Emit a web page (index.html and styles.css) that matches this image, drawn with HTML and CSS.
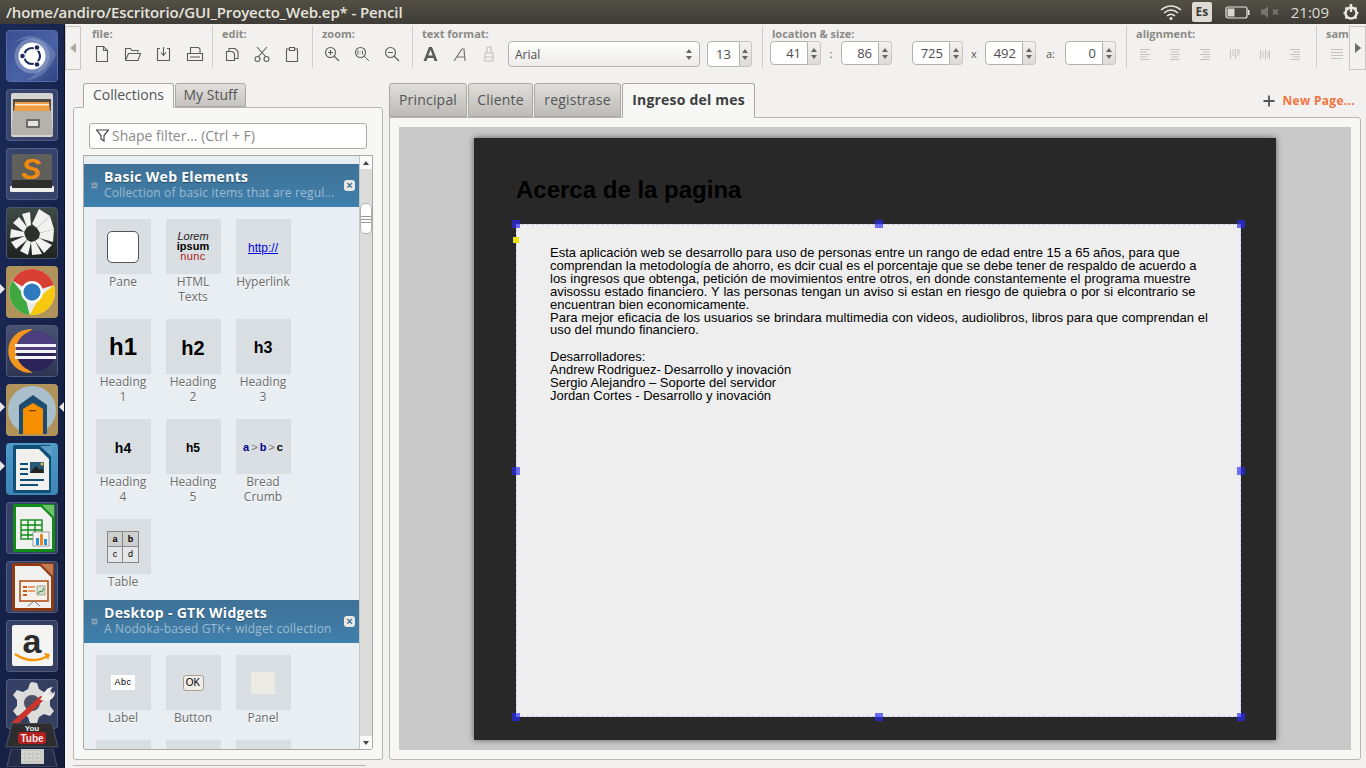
FILE: index.html
```html
<!DOCTYPE html>
<html lang="es">
<head>
<meta charset="utf-8">
<title>Pencil</title>
<link rel="stylesheet" href="styles.css">
</head>
<body>
<header class="titlebar">
  <div class="win-title">/home/andiro/Escritorio/GUI_Proyecto_Web.ep* - Pencil</div>
  <div class="tray">
    <svg class="tray-wifi" width="22" height="16" viewBox="0 0 22 16"><g fill="none" stroke="#e8e6df" stroke-width="1.6"><path d="M1 6 Q11 -2 21 6"/><path d="M4 9 Q11 3 18 9"/><path d="M7 12 Q11 8.5 15 12"/></g><circle cx="11" cy="14.5" r="1.5" fill="#e8e6df"/></svg>
    <span class="tray-lang">Es</span>
    <svg class="tray-batt" width="25" height="13" viewBox="0 0 25 13"><rect x="1" y="1" width="21" height="11" rx="2" fill="none" stroke="#e8e6df" stroke-width="1.2"/><rect x="2.5" y="2.5" width="7" height="8" fill="#d8d6cf"/><rect x="23" y="4" width="1.5" height="5" fill="#e8e6df"/></svg>
    <svg class="tray-vol" width="19" height="12" viewBox="0 0 19 12"><path d="M0 3.500h3l4-3.500v12l-4-3.500H0z" fill="#77756d"/><path d="M12 3.500l5 5m0-5l-5 5" stroke="#77756d" stroke-width="1.800"/></svg>
    <span class="tray-clock">21:09</span>
    <svg class="tray-power" width="18" height="18" viewBox="0 0 18 18"><circle cx="9" cy="10" r="5.500" fill="none" stroke="#e8e6df" stroke-width="2.600"/><path d="M9 1v8" stroke="#e8e6df" stroke-width="2.400"/><path d="M1.500 10h2M14.500 10h2M3.500 4.500l1.500 1.500M14.500 4.500l-1.500 1.500M3.500 15.500l1.500-1.500M14.500 15.500l-1.500-1.500" stroke="#e8e6df" stroke-width="2"/></svg>
  </div>
</header>

<div class="desktop">
  <nav class="launcher">
    <div class="tile tile-ubuntu">
      <svg width="52" height="52" viewBox="0 0 52 52"><path d="M6 14 Q30 -6 50 24 Q40 50 20 50 Q46 36 32 14 Q22 4 6 14z" fill="#8ea0c8" opacity=".4"/><circle cx="26" cy="26" r="17.500" fill="#93a5cc" opacity=".55"/><circle cx="26" cy="26" r="13.500" fill="#fff"/><circle cx="26" cy="26" r="8" fill="none" stroke="#1d2a5c" stroke-width="2.200"/><circle cx="31" cy="17.500" r="3.400" fill="#fff"/><circle cx="16.500" cy="26" r="3.400" fill="#fff"/><circle cx="31" cy="34.500" r="3.400" fill="#fff"/><circle cx="31" cy="17.500" r="2.300" fill="#1d2a5c"/><circle cx="16.500" cy="26" r="2.300" fill="#1d2a5c"/><circle cx="31" cy="34.500" r="2.300" fill="#1d2a5c"/></svg>
    </div>
    <div class="tile tile-glass">
      <svg width="52" height="52" viewBox="0 0 52 52"><rect x="5" y="4" width="42" height="44" rx="2" fill="#d5d4d0"/><rect x="7" y="10" width="38" height="14" fill="#4f4a43"/><path d="M9 13h34l1 9H8z" fill="#ee9c45"/><rect x="9" y="15" width="34" height="1.500" fill="#fbe9c8"/><path d="M7 22 H45 L47 46 H5z" fill="#b3b2ad"/><rect x="20" y="30" width="14" height="9" rx="1" fill="#6a6a66"/><rect x="22" y="32" width="10" height="5" fill="#e4e4e0"/></svg>
    </div>
    <div class="tile tile-glass">
      <svg width="52" height="52" viewBox="0 0 52 52"><rect x="4" y="38" width="44" height="6" rx="1" fill="#eeeeec"/><rect x="6" y="6" width="40" height="34" rx="2" fill="#5f5f5c"/><rect x="6" y="32" width="40" height="8" fill="#2e2e2c"/><text x="25" y="31" class="sublime-s">S</text></svg>
    </div>
    <div class="tile tile-pinwheel">
      <svg width="52" height="52" viewBox="0 0 52 52"><g fill="#f2f2f0"><path d="M26 17 L33 2 L44 9 L31 21z"/><path d="M31 21 L44 9 L48 22 L34 26z"/><path d="M34 26 L48 22 L47 35 L33 31z"/><path d="M33 31 L46 38 L38 46 L29 34z"/><path d="M29 34 L36 47 L26 48 L25 35z"/><path d="M25 35 L22 48 L14 44 L21 33z"/><path d="M21 33 L10 42 L5 35 L19 29z"/><path d="M19 29 L4 31 L5 22 L18 25z"/><path d="M18 25 L7 16 L13 10 L21 20z"/><path d="M21 20 L16 7 L24 5 L25 18z"/></g><circle cx="26" cy="26" r="6" fill="#2d312e"/></svg>
    </div>
    <div class="tile tile-tan">
      <svg width="52" height="52" viewBox="0 0 52 52"><g transform="translate(26 26) scale(1.15) translate(-26 -26)"><circle cx="26" cy="26" r="20" fill="#eaeaea"/><path d="M26 6 A20 20 0 0 1 45 20 L26 26 L9 16 A20 20 0 0 1 26 6z" fill="#d93f32"/><path d="M45 20 A20 20 0 0 1 24 46 L33 30z" fill="#f6c90e"/><path d="M24 46 A20 20 0 0 1 9 16 L20 30z" fill="#3fa93f"/><circle cx="26" cy="26" r="9.500" fill="#fff"/><circle cx="26" cy="26" r="7.500" fill="#2f79c0"/></g></svg>
    </div>
    <div class="tile tile-slate">
      <svg width="52" height="52" viewBox="0 0 52 52"><path d="M24 5 A21 21 0 0 0 24 47 A24 24 0 0 1 24 5z" fill="#f2951e" stroke="#f2951e" stroke-width="1.500"/><circle cx="30" cy="26" r="20" fill="#2c2458"/><path d="M30 6 A20 20 0 0 1 50 26 H10 A20 20 0 0 1 30 6z" fill="#4d3f7d"/><g fill="#f3f3f8"><rect x="9" y="19" width="41" height="3"/><rect x="9" y="25" width="41" height="3"/><rect x="9" y="31" width="41" height="3"/></g></svg>
    </div>
    <div class="tile tile-tan">
      <svg width="52" height="52" viewBox="0 0 52 52"><circle cx="26" cy="26" r="24" fill="#a9c0cc"/><path d="M13 50 V21 L27 11 L41 21 V50z" fill="#1c4d70"/><path d="M17 50 V25 L27 19 L37 25 V50z" fill="#f79000"/><rect x="23" y="26" width="7" height="1.300" fill="#7b4700"/></svg>
    </div>
    <div class="tile tile-writer">
      <svg width="52" height="52" viewBox="0 0 52 52"><rect x="7" y="2" width="38" height="48" rx="2" fill="#0f4f78"/><path d="M10 6 H33 L43 16 V47 H10z" fill="#f0f0ee"/><path d="M34 3 H46 V14z" fill="#5a9dc5"/><g fill="#0f4f78"><rect x="14" y="20" width="8" height="2"/><rect x="14" y="25" width="8" height="2"/><rect x="14" y="30" width="8" height="2"/><rect x="14" y="36" width="24" height="2"/><rect x="14" y="41" width="18" height="2"/></g><rect x="24" y="19" width="14" height="11" fill="#2c5878"/><path d="M24 30 L30 23 L34 27 L36 25 L38 30z" fill="#222"/><circle cx="36" cy="21" r="1.500" fill="#f4c430"/></svg>
    </div>
    <div class="tile tile-glass">
      <svg width="52" height="52" viewBox="0 0 52 52"><rect x="7" y="2" width="42" height="48" rx="2" fill="#118a1a"/><path d="M10 5 H35 L46 16 V47 H10z" fill="#f0f0ee"/><path d="M36 3 H48 V15z" fill="#6cc06a"/><g fill="none" stroke="#0f8a17" stroke-width="1.400"><rect x="15" y="18" width="21" height="19"/><path d="M15 23h21M15 28h21M15 33h21M22 18v19M29 18v19"/></g><rect x="27" y="30" width="16" height="14" fill="#f5f5f3" stroke="#888" stroke-width=".8"/><rect x="30" y="36" width="3" height="7" fill="#2c8fd0"/><rect x="34" y="32" width="3" height="11" fill="#e68a1e"/><rect x="38" y="37" width="3" height="6" fill="#2c8fd0"/></svg>
    </div>
    <div class="tile tile-glass">
      <svg width="52" height="52" viewBox="0 0 52 52"><rect x="6" y="2" width="42" height="48" rx="2" fill="#8f3a11"/><path d="M9 5 H34 L45 16 V47 H9z" fill="#f0f0ee"/><path d="M35 3 H47 V15z" fill="#c47a52"/><rect x="14" y="20" width="28" height="20" fill="#f8f2ea" stroke="#b4501c" stroke-width="1.600"/><g fill="#c9571e"><rect x="17" y="25" width="4" height="2"/><rect x="17" y="29" width="4" height="2"/><rect x="17" y="33" width="4" height="2"/></g><rect x="22" y="25" width="7" height="2" fill="#e0a070"/><rect x="22" y="29" width="7" height="2" fill="#e0a070"/><rect x="31" y="25" width="8" height="9" fill="#d8e2d0" stroke="#777" stroke-width=".6"/><path d="M32 33l2-3 2 1 2-4" stroke="#2c8a2c" fill="none"/><path d="M28 40l-6 5M28 40l6 5" stroke="#777" stroke-width="1"/></svg>
    </div>
    <div class="tile tile-glass">
      <svg width="52" height="52" viewBox="0 0 52 52"><rect x="6" y="5" width="41" height="41" rx="2" fill="#f4f4f2"/><text x="26" y="33" class="amazon-a">a</text><path d="M9 34 Q25 45 42 36" fill="none" stroke="#f79400" stroke-width="2.400"/><path d="M38 33 L44 34 L42 40z" fill="#f79400"/></svg>
    </div>
    <div class="tile tile-glass tile-tools">
      <svg width="52" height="52" viewBox="0 0 52 52"><path d="M26 3l5 1 2 6 5 3 6-2 4 5-4 5 0 6 4 5-4 5-6-2-5 3-2 6h-7l-2-6-5-3-6 2-4-5 4-5v-6l-4-5 4-5 6 2 5-3 2-6z" fill="#dcdcda"/><circle cx="26" cy="24" r="8" fill="#4d5166"/><path d="M9 44 L35 20" stroke="#c9342c" stroke-width="5.500" stroke-linecap="round"/><path d="M34 21 L38 14 Q41 8 47 8 L42 14 L45 17 L49 12 Q49 20 41 22z" fill="#eeeeec"/></svg>
    </div>
    <div class="fold fold-yt">
      <svg width="58" height="26" viewBox="0 0 58 26"><path d="M9 0 H49 L55 24 H3z" fill="#2d2c2f" stroke="#5b6277" stroke-width=".8"/><text x="29" y="8" class="yt-you">You</text><rect x="15" y="9" width="28" height="12" rx="3" fill="#b1201f"/><text x="29" y="19" class="yt-tube">Tube</text></svg>
    </div>
    <div class="fold fold-last">
      <svg width="58" height="18" viewBox="0 0 58 18"><path d="M8 0 H50 L54 18 H4z" fill="#232b47" stroke="#5b6277" stroke-width=".8"/><rect x="18" y="0" width="23" height="15" fill="#c8c8c4"/><path d="M19 3h21M19 7h21M19 11h21" stroke="#eeeeec" stroke-dasharray="2 2"/></svg>
    </div>
    <span class="pip pip-l pip-chrome"></span>
    <span class="pip pip-l pip-home"></span>
    <span class="pip pip-r pip-home"></span>
    <span class="pip pip-l pip-writer"></span>
  </nav>

  <div class="app">
    <div class="toolbar">
      <button class="scroll-btn scroll-left" aria-label="left"><i class="tri-left"></i></button>
      <section class="tgroup g-file">
        <h4>file:</h4>
        <div class="icons">
          <svg width="16" height="18" viewBox="0 0 16 18"><path d="M2.500 1.500h7l4 4v11h-11z M9.500 1.500v4h4" class="ic"/></svg>
          <svg width="18" height="16" viewBox="0 0 18 16"><path d="M1.500 14.500v-12h5l1.500 2h6v2 M1.500 14.500h12.500l2.500-7h-12l-3 7" class="ic"/></svg>
          <svg width="16" height="16" viewBox="0 0 16 16"><path d="M4 2.500H1.500v12h12v-12H11 M7.500 1v8 M5 6.500l2.500 3 2.500-3" class="ic"/></svg>
          <svg width="18" height="16" viewBox="0 0 18 16"><path d="M4.500 7V1.500h8L14 3v4 M1.500 7.500h15v7h-15z M4 11h10" class="ic"/></svg>
        </div>
      </section>
      <section class="tgroup g-edit">
        <h4>edit:</h4>
        <div class="icons">
          <svg width="14" height="16" viewBox="0 0 14 16"><path d="M1.500 5.500h6l2 2v7h-8z M4 5V2.500h6l3 3v7h-3" class="ic"/></svg>
          <svg width="16" height="17" viewBox="0 0 16 17"><path d="M3 1l9 10 M13 1L4 11" class="ic"/><circle cx="3.500" cy="13" r="2.500" class="ic"/><circle cx="12.500" cy="13" r="2.500" class="ic"/></svg>
          <svg width="14" height="17" viewBox="0 0 14 17"><path d="M4.500 3h-3v12.500h11V3h-3 M4.500 4.500V1.500h5v3z" class="ic"/></svg>
        </div>
      </section>
      <section class="tgroup g-zoom">
        <h4>zoom:</h4>
        <div class="icons">
          <svg width="16" height="16" viewBox="0 0 16 16"><circle cx="6.500" cy="6.500" r="5" class="ic"/><path d="M10 10l5 5 M4 6.500h5 M6.500 4v5" class="ic"/></svg>
          <svg width="16" height="16" viewBox="0 0 16 16"><circle cx="6.500" cy="6.500" r="5" class="ic"/><path d="M10 10l5 5 M4 4.500v4 M8.500 4.500v4 M6.300 5.500v.5 M6.300 7.500v.5" class="ic ic-thin"/></svg>
          <svg width="16" height="16" viewBox="0 0 16 16"><circle cx="6.500" cy="6.500" r="5" class="ic"/><path d="M10 10l5 5 M4 6.500h5" class="ic"/></svg>
        </div>
      </section>
      <section class="tgroup g-text">
        <h4>text format:</h4>
        <div class="icons icons-text">
          <svg class="tf-bold" width="15" height="14" viewBox="0 0 15 14"><path d="M0.500 14L6 0h3l5.500 14h-3l-1-3H4.500l-1 3z M5.300 8.500h4.400L7.500 3z" fill="#5b5b58" fill-rule="evenodd"/></svg>
          <svg class="tf-ital" width="14" height="13" viewBox="0 0 14 13"><path d="M1 13L9 1h2l1 12 M3.500 9h8" fill="none" stroke="#77766f" stroke-width="1.200"/></svg>
          <svg class="tf-brush" width="10" height="16" viewBox="0 0 10 16"><path d="M3 1h4v6H3z M1 7h8v8H1z M1 11h8" fill="none" stroke="#c4c3be" stroke-width="1.200"/></svg>
          <div class="combo"><span>Arial</span><i class="updown"></i></div>
          <div class="spin spin-tall"><span class="spin-val">13</span><span class="spin-btn"><i class="updown"></i></span></div>
        </div>
      </section>
      <section class="tgroup g-loc">
        <h4>location &amp; size:</h4>
        <div class="icons icons-loc">
          <div class="spin"><span class="spin-val">41</span><span class="spin-btn"><i class="updown"></i></span></div>
          <span class="loc-sep sep-colon">:</span>
          <div class="spin"><span class="spin-val">86</span><span class="spin-btn"><i class="updown"></i></span></div>
          <span class="loc-gap"></span>
          <div class="spin"><span class="spin-val">725</span><span class="spin-btn"><i class="updown"></i></span></div>
          <span class="loc-sep sep-x">x</span>
          <div class="spin"><span class="spin-val">492</span><span class="spin-btn"><i class="updown"></i></span></div>
          <span class="loc-sep sep-a">a:</span>
          <div class="spin"><span class="spin-val">0</span><span class="spin-btn"><i class="updown"></i></span></div>
        </div>
      </section>
      <section class="tgroup g-align">
        <h4>alignment:</h4>
        <div class="icons">
          <svg width="10" height="11" viewBox="0 0 10 11"><path d="M0 .5h10M0 3h7M0 5.500h10M0 8h7M0 10.500h10" class="al"/></svg>
          <svg width="10" height="11" viewBox="0 0 10 11"><path d="M0 .5h10M1.500 3h7M0 5.500h10M1.500 8h7M0 10.500h10" class="al"/></svg>
          <svg width="10" height="11" viewBox="0 0 10 11"><path d="M0 .5h10M3 3h7M0 5.500h10M3 8h7M0 10.500h10" class="al"/></svg>
          <svg width="10" height="11" viewBox="0 0 10 11"><path d="M.5 0v10M3 0v7M5.500 0v10M8 0v7M10 0v5" class="al"/></svg>
          <svg width="10" height="11" viewBox="0 0 10 11"><path d="M.5 1v9M3 2.500v6M5.500 0v11M8 2.500v6M9.500 1v9" class="al"/></svg>
          <svg width="10" height="11" viewBox="0 0 10 11"><path d="M0 .5h10M3 3h7M0 5.500h10M3 8h7M0 10.500h10" class="al"/></svg>
        </div>
      </section>
      <section class="tgroup g-same">
        <h4>same</h4>
        <div class="icons">
          <svg width="12" height="11" viewBox="0 0 12 11"><path d="M0 .5h12M0 3.500h12M0 6.500h12M0 9.500h12" class="al"/></svg>
        </div>
      </section>
      <button class="scroll-btn scroll-right" aria-label="right"><i class="tri-right"></i></button>
    </div>

    <div class="workspace">
      <aside class="sidebar">
        <div class="side-tabs">
          <span class="side-tab side-tab-on">Collections</span>
          <span class="side-tab side-tab-off">My Stuff</span>
        </div>
        <div class="side-panel">
          <div class="filter">
            <svg width="13" height="13" viewBox="0 0 13 13"><path d="M.5 1h12L8 6.500V12L5 10V6.500z" fill="none" stroke="#444" stroke-width="1.200"/></svg>
            <span>Shape filter... (Ctrl + F)</span>
          </div>
          <div class="shape-list">
            <div class="shape-scroll">
              <div class="coll-head">
                <span class="coll-min"></span>
                <div class="coll-txt"><b>Basic Web Elements</b><small>Collection of basic items that are regul...</small></div>
                <span class="coll-close">×</span>
              </div>
              <div class="shapes">
                <figure><div class="thumb"><span class="pane"></span></div><figcaption>Pane</figcaption></figure>
                <figure><div class="thumb html-t"><em>Lorem</em><b>ipsum</b><span>nunc</span></div><figcaption>HTML Texts</figcaption></figure>
                <figure><div class="thumb"><u class="hyper">http://</u></div><figcaption>Hyperlink</figcaption></figure>
                <figure><div class="thumb"><b class="h1">h1</b></div><figcaption>Heading 1</figcaption></figure>
                <figure><div class="thumb"><b class="h2">h2</b></div><figcaption>Heading 2</figcaption></figure>
                <figure><div class="thumb"><b class="h3">h3</b></div><figcaption>Heading 3</figcaption></figure>
                <figure><div class="thumb"><b class="h4">h4</b></div><figcaption>Heading 4</figcaption></figure>
                <figure><div class="thumb"><b class="h5">h5</b></div><figcaption>Heading 5</figcaption></figure>
                <figure><div class="thumb crumb"><b class="cb">a</b> <i>&gt;</i> <b class="cb">b</b> <i>&gt;</i> <b>c</b></div><figcaption>Bread Crumb</figcaption></figure>
                <figure class="one-line"><div class="thumb"><div class="tbl"><b>a</b><b>b</b><span>c</span><span>d</span></div></div><figcaption>Table</figcaption></figure>
              </div>
              <div class="coll-head coll-2">
                <span class="coll-min"></span>
                <div class="coll-txt"><b>Desktop - GTK Widgets</b><small>A Nodoka-based GTK+ widget collection</small></div>
                <span class="coll-close">×</span>
              </div>
              <div class="shapes shapes-2">
                <figure class="one-line"><div class="thumb"><span class="w-label">Abc</span></div><figcaption>Label</figcaption></figure>
                <figure class="one-line"><div class="thumb"><span class="w-ok">OK</span></div><figcaption>Button</figcaption></figure>
                <figure class="one-line"><div class="thumb"><span class="w-panel"></span></div><figcaption>Panel</figcaption></figure>
                <figure><div class="thumb"></div></figure>
                <figure><div class="thumb"></div></figure>
                <figure><div class="thumb"></div></figure>
              </div>
            </div>
            <div class="vscroll">
              <span class="vs-btn vs-up"><i></i></span>
              <span class="vs-track"><span class="vs-thumb"></span></span>
              <span class="vs-btn vs-down"><i></i></span>
            </div>
          </div>
        </div>
        <div class="side-foot"></div>
      </aside>

      <main class="pages">
        <div class="page-tabs">
          <span class="page-tab">Principal</span>
          <span class="page-tab">Cliente</span>
          <span class="page-tab">registrase</span>
          <span class="page-tab page-tab-on">Ingreso del mes</span>
          <span class="new-page"><svg width="14" height="14" viewBox="0 0 14 14"><path d="M7 1.500v11M1.500 7h11" stroke="#4f565b" stroke-width="1.800"/></svg><b>New Page...</b></span>
        </div>
        <div class="page-frame">
          <div class="canvas">
            <div class="sheet">
              <h1 class="sheet-title">Acerca de la pagina</h1>
              <div class="box">
                <p>Esta aplicación web se desarrollo para uso de personas entre un rango de edad entre 15 a 65 años, para que</p>
                <p>comprendan la metodología de ahorro, es dcir cual es el porcentaje que se debe tener de respaldo de acuerdo a</p>
                <p>los ingresos que obtenga, petición de movimientos entre otros, en donde constantemente el programa muestre</p>
                <p>avisossu estado financiero. Y las personas tengan un aviso si estan en riesgo de quiebra o por si elcontrario se</p>
                <p>encuentran bien economicamente.</p>
                <p>Para mejor eficacia de los usuarios se brindara multimedia con videos, audiolibros, libros para que comprendan el</p>
                <p>uso del mundo financiero.</p>
                <p class="blank">&nbsp;</p>
                <p>Desarrolladores:</p>
                <p>Andrew Rodriguez- Desarrollo y inovación</p>
                <p>Sergio Alejandro – Soporte del servidor</p>
                <p>Jordan Cortes - Desarrollo y inovación</p>
                <i class="h h-tl"></i><i class="h h-tc"></i><i class="h h-tr"></i>
                <i class="h h-ml"></i><i class="h h-mr"></i>
                <i class="h h-bl"></i><i class="h h-bc"></i><i class="h h-br"></i>
                <i class="h-y"></i>
              </div>
            </div>
          </div>
        </div>
      </main>
    </div>
  </div>
</div>
</body>
</html>
```
FILE: styles.css
```css
* { box-sizing: border-box; }
html, body { margin: 0; height: 100%; }
body {
  width: 1366px; height: 768px; overflow: hidden;
  display: flex; flex-direction: column;
  font-family: "Open Sans", "Noto Sans", sans-serif;
  background: #f2f1f0;
}
svg { display: block; flex: none; }

/* title bar */
.titlebar {
  height: 24px; flex: none; display: flex; align-items: center; justify-content: space-between;
  background: linear-gradient(#524f46, #3e3c36);
  color: #e6e4dc;
}
.win-title { padding-left: 6px; font-size: 15px; font-weight: 600; letter-spacing: -.12px; white-space: nowrap; }
.tray { display: flex; align-items: center; padding-right: 6px; }
.tray-wifi { margin-right: 10px; }
.tray-lang { width: 20px; height: 20px; background: #dedbd2; color: #3c3b37; border-radius: 2px; font-size: 12px; font-weight: 700; line-height: 20px; text-align: center; margin-right: 13px; }
.tray-batt { margin-right: 11px; }
.tray-vol { margin-right: 11px; }
.tray-clock { font-size: 15px; color: #dfddd5; margin-right: 13px; }

/* launcher */
.desktop { flex: 1; display: flex; min-height: 0; }
.launcher {
  width: 65px; flex: none; position: relative;
  display: flex; flex-direction: column; align-items: flex-start;
  padding: 6px 0 0 6px; gap: 7px;
  background: linear-gradient(100deg, #1a2a57 0%, #16224a 55%, #151c3a 100%);
  border-right: 1px solid #0e1228;
  overflow: hidden;
}
.tile { width: 52px; height: 52px; border-radius: 4px; flex: none; overflow: hidden; }
.tile-ubuntu { background: linear-gradient(135deg, #3a4f92, #4a62a6 60%, #2f4380); border: 1px solid #5a6ca6; }
.tile-glass { background: rgba(112,124,160,.35); border: 1px solid rgba(150,160,190,.3); }
.tile-pinwheel { background: linear-gradient(#3f4a46, #1f2321); border: 1px solid #4a5572; }
.tile-tan { background: #b0935a; }
.tile-slate { background: linear-gradient(#4a5273, #2d3454); border: 1px solid #515b7c; }
.tile-writer { background: linear-gradient(#4f9ac9, #3d85b5); }
.tile svg { margin: -1px; }
.tile-tan svg, .tile-writer svg { margin: 0; }
.tile-tools { height: 50px; }
.sublime-s { font: italic 700 30px "Liberation Sans", sans-serif; fill: #f28a10; text-anchor: middle; }
.amazon-a { font: 700 34px "Liberation Sans", sans-serif; fill: #2b2b2b; text-anchor: middle; }
.yt-you { font: 700 8px "Liberation Sans", sans-serif; fill: #eeeeee; text-anchor: middle; }
.yt-tube { font: 700 10px "Liberation Sans", sans-serif; fill: #f5e8e8; text-anchor: middle; }
.fold { margin-left: -3px; flex: none; }
.fold-yt { margin-top: -13px; }
.fold-last { margin-top: -7px; }
.pip { position: absolute; width: 0; height: 0; border-top: 5px solid transparent; border-bottom: 5px solid transparent; }
.pip-l { left: 0; border-left: 5px solid #e8e8e8; }
.pip-r { left: 59px; border-right: 5px solid #e8e8e8; }
.pip-chrome { top: 260px; }
.pip-home { top: 378px; }
.pip-writer { top: 437px; }

/* toolbar */
.app { flex: 1; display: flex; flex-direction: column; min-width: 0; }
.toolbar { height: 46px; flex: none; display: flex; padding-top: 2px; position: relative; }
.scroll-btn { width: 16px; height: 44px; padding: 0; background: #f2f1f0; border: 1px solid #c8c6c0; display: flex; align-items: center; justify-content: center; flex: none; }
.tri-left { border-top: 5px solid transparent; border-bottom: 5px solid transparent; border-right: 6px solid #aaa9a4; }
.tri-right { border-top: 5px solid transparent; border-bottom: 5px solid transparent; border-left: 6px solid #6b6a66; }
.scroll-right { position: absolute; left: 1284px; top: 2px; width: 17px; }
.tgroup { height: 42px; border-right: 1px solid #d0cec8; flex: none; overflow: hidden; }
.tgroup h4 { margin: 0; font-size: 11px; line-height: 13px; font-weight: 700; color: #8b8a85; padding-top: 1px; white-space: nowrap; }
.icons { display: flex; align-items: center; height: 26px; padding-top: 2px; }
.g-file { width: 132px; padding-left: 11px; }
.g-file .icons { gap: 14px; padding-left: 2px; }
.g-edit { width: 100px; padding-left: 9px; }
.g-edit .icons { gap: 15px; padding-left: 3px; }
.g-zoom { width: 100px; padding-left: 9px; }
.g-zoom .icons { gap: 14px; padding-left: 2px; }
.g-text { width: 350px; padding-left: 9px; }
.icons-text { padding-left: 1px; }
.g-loc { width: 364px; padding-left: 7px; }
.g-loc h4 { padding-left: 2px; }
.g-align { width: 190px; padding-left: 9px; }
.g-align .icons { gap: 20px; padding-left: 4px; }
.g-same { width: 32px; padding-left: 9px; border-right: 0; }
.g-same .icons { padding-left: 5px; }
.tf-bold { margin-right: 15px; }
.tf-ital { margin-right: 17px; }
.tf-brush { margin-right: 14px; }
.ic { fill: none; stroke: #5c5c58; stroke-width: 1.100; }
.ic-thin { stroke-width: 1; }
.al { fill: none; stroke: #c4c3be; stroke-width: 1; }

.combo { width: 192px; height: 26px; flex: none; border: 1px solid #b5b3ad; border-radius: 4px; background: linear-gradient(#fff, #ecebe8); display: flex; align-items: center; justify-content: space-between; padding: 0 6px; font-size: 12px; color: #4c4c4c; }
.updown { display: block; width: 7px; height: 11px; position: relative; }
.updown::before, .updown::after { content: ""; position: absolute; left: 0; border-left: 3.500px solid transparent; border-right: 3.500px solid transparent; }
.updown::before { top: 0; border-bottom: 4px solid #666; }
.updown::after { bottom: 0; border-top: 4px solid #666; }
.spin { display: flex; width: 51px; height: 24px; flex: none; }
.spin-val { width: 38px; height: 24px; background: #fff; border: 1px solid #b5b3ad; border-radius: 4px 0 0 4px; font-size: 13px; color: #4c4c4c; line-height: 22px; text-align: right; padding-right: 6px; }
.spin-btn { width: 13px; height: 24px; background: linear-gradient(#f4f3f1, #dcdbd7); border: 1px solid #c8c6c0; border-left: 0; border-radius: 0 4px 4px 0; display: flex; align-items: center; justify-content: center; }
.spin-tall { margin-left: 7px; width: 45px; height: 26px; }
.spin-tall .spin-val { width: 33px; height: 26px; line-height: 24px; text-align: center; padding: 0; }
.spin-tall .spin-btn { width: 12px; height: 26px; }
.icons-loc { padding-top: 0; }
.loc-sep { font-size: 11px; color: #55544f; text-align: center; flex: none; }
.sep-colon { width: 20px; }
.sep-x { width: 22px; }
.sep-a { width: 29px; }
.loc-gap { width: 20px; flex: none; }

/* workspace */
.workspace { flex: 1; display: flex; min-height: 0; padding-top: 13px; }
.sidebar { width: 318px; flex: none; margin-left: 8px; display: flex; flex-direction: column; }
.side-tabs { display: flex; height: 24px; padding-left: 10px; gap: 1px; flex: none; }
.side-tab { height: 24px; font-size: 14px; line-height: 22px; color: #555; text-align: center; border: 1px solid #aaa9a3; border-radius: 3px 3px 0 0; background: linear-gradient(#e2e1de, #c4c3bf); }
.side-tab-on { background: #f7f7f6; border-bottom-color: #f7f7f6; height: 25px; position: relative; z-index: 1; width: 91px; }
.side-tab-off { width: 71px; }
.side-panel { width: 310px; height: 653px; flex: none; background: #f7f7f6; border: 1px solid #b8b6b0; border-radius: 3px; padding: 15px 9px 0 9px; display: flex; flex-direction: column; }
.filter { height: 26px; flex: none; margin: 0 6px; border: 1px solid #a9a8a2; border-radius: 3px; background: #fff; display: flex; align-items: center; gap: 3px; padding: 0 0 2px 6px; font-size: 14px; color: #8a8a86; }
.shape-list { margin-top: 6px; height: 595px; flex: none; display: flex; border: 1px solid #a9a8a2; border-radius: 0 0 3px 3px; overflow: hidden; background: #e9eef3; }
.shape-scroll { width: 275px; flex: none; padding-top: 8px; overflow: hidden; }
.coll-head { height: 43px; background: linear-gradient(#3f7196, #3f80ad); display: flex; align-items: flex-start; color: #fff; position: relative; }
.coll-min { width: 7px; height: 7px; margin: 18px 0 0 7px; background: #7fa0ba; border: 1px solid #5a87a8; position: relative; }
.coll-min::after { content: ""; position: absolute; left: 1px; top: 2px; width: 3px; height: 1px; background: #3f6d8f; }
.coll-txt { margin-left: 6px; padding-top: 5px; white-space: nowrap; }
.coll-txt b { display: block; font-size: 14px; line-height: 16px; font-weight: 700; letter-spacing: .3px; text-shadow: 0 1px 1px rgba(0,0,0,.4); }
.coll-txt small { display: block; font-size: 12px; line-height: 15px; letter-spacing: .16px; color: #9dbbd1; }
.coll-close { position: absolute; right: 4px; top: 16px; width: 11px; height: 11px; border-radius: 3px; background: #e8e8e6; color: #3f6d8f; font: 700 11px/10px "Liberation Sans", sans-serif; text-align: center; }
.shapes { display: grid; grid-template-columns: repeat(3, 70px); grid-auto-rows: 100px; padding: 12px 0 0 4px; height: 393px; align-content: start; }
.shapes figure { margin: 0; display: flex; flex-direction: column; align-items: center; }
.shapes figure.one-line { height: 81px; }
.shapes-2 { grid-auto-rows: 85px; height: auto; }
.thumb { width: 55px; height: 55px; flex: none; background: #d9dee2; display: flex; flex-direction: column; align-items: center; justify-content: center; font-family: "Liberation Sans", sans-serif; color: #000; }
figcaption { width: 55px; font-size: 12px; line-height: 15px; text-align: center; color: #6b6b68; text-shadow: 0 1px 0 #fff; }
.pane { width: 32px; height: 32px; background: #fff; border: 1px solid #555; border-radius: 5px; }
.html-t { font-size: 11px; line-height: 10px; padding-bottom: 2px; }
.html-t em { color: #222; }
.html-t b { font-size: 11px; }
.html-t span { color: #b02020; letter-spacing: .4px; }
.hyper { color: #0000e0; font-size: 12px; margin-top: 2px; }
.h1 { font-size: 24px; }
.h2 { font-size: 20px; margin-top: 3px; }
.h3 { font-size: 16px; margin-top: 3px; }
.h4 { font-size: 14px; margin-top: 3px; }
.h5 { font-size: 12px; margin-top: 2px; }
.crumb { flex-direction: row; font-size: 11px; gap: 2px; }
.crumb i { font-style: normal; color: #777; }
.cb { color: #00008b; }
.tbl { width: 32px; height: 32px; display: grid; grid-template-columns: 1fr 1fr; grid-template-rows: 1fr 1fr; border: 1px solid #888; font-size: 9px; line-height: 14px; text-align: center; background: #e4e6e8; }
.tbl b { background: #cfcfcf; border-right: 1px solid #888; border-bottom: 1px solid #888; }
.tbl b:nth-child(2) { border-right: 0; }
.tbl span:nth-child(3) { border-right: 1px solid #888; }
.w-label { width: 24px; height: 15px; background: #fff; font-size: 9px; line-height: 15px; text-align: center; letter-spacing: .5px; }
.w-ok { width: 21px; height: 16px; border: 1px solid #a59f90; border-radius: 3px; background: #f0eee8; font-size: 10px; line-height: 14px; text-align: center; }
.w-panel { width: 24px; height: 22px; background: #ecebe6; }
.vscroll { width: 13px; flex: none; background: #dcdcda; border-left: 1px solid #c8c6c0; display: flex; flex-direction: column; }
.vs-btn { height: 13px; flex: none; background: #fafaf9; display: flex; align-items: center; justify-content: center; }
.vs-btn i { border-left: 3.500px solid transparent; border-right: 3.500px solid transparent; }
.vs-up i { border-bottom: 4px solid #444; }
.vs-down i { border-top: 4px solid #444; }
.vs-track { flex: 1; padding-top: 34px; }
.vs-thumb { display: block; width: 12px; height: 31px; background: repeating-linear-gradient(#fff 0 12px, #999 12px 13px, #fff 13px 15px, #999 15px 16px, #fff 16px 18px, #999 18px 19px, #fff 19px 31px); border: 1px solid #b5b3ad; border-radius: 5px; }
.side-foot { width: 293px; height: 2px; margin-top: 5px; border-top: 1px solid #b8b6b0; }

/* pages */
.pages { width: 977px; flex: none; margin-left: -2px; display: flex; flex-direction: column; }
.page-tabs { height: 34px; flex: none; display: flex; gap: 1px; position: relative; }
.page-tab { height: 34px; font-size: 14px; line-height: 32px; text-align: center; color: #555; letter-spacing: .2px; border: 1px solid #a9a8a2; border-radius: 3px 3px 0 0; background: linear-gradient(#dfdedb, #bcbbb7); }
.page-tab:nth-child(1) { width: 78px; }
.page-tab:nth-child(2) { width: 65px; }
.page-tab:nth-child(3) { width: 87px; }
.page-tab-on:nth-child(4) { width: 133px; background: #f7f7f6; color: #3e3e3e; font-weight: 700; letter-spacing: .2px; border-bottom-color: #f7f7f6; height: 35px; z-index: 1; }
.new-page { margin-left: auto; margin-right: 11px; display: flex; align-items: center; gap: 7px; height: 34px; padding-top: 1px; }
.new-page b { font-size: 12px; color: #f0743e; font-weight: 700; letter-spacing: .3px; }
.page-frame { width: 972px; height: 643px; flex: none; background: #f7f7f6; border: 1px solid #b8b6b0; border-radius: 0 3px 3px 3px; padding: 9px; }
.canvas { width: 952px; height: 623px; background: #c9c9c9; padding: 11px 0 0 75px; }
.sheet { width: 802px; height: 602px; background: #282828; position: relative; box-shadow: 0 0 6px rgba(0,0,0,.55); }
.sheet-title { position: absolute; left: 42px; top: 38px; margin: 0; font: 700 24px/28px "Liberation Sans", sans-serif; color: #000; white-space: nowrap; }
.box { position: absolute; left: 42px; top: 86px; width: 725px; height: 493px; background: #eeeeee; outline: 1px dashed rgba(90,90,240,.22); outline-offset: -1px; padding: 23px 0 0 34px; font: 13px/12.900px "Liberation Sans", sans-serif; color: #000; }
.box p { margin: 0; white-space: nowrap; }
.box p:nth-child(1) { word-spacing: -.1px; }
.box p:nth-child(2) { word-spacing: -.1px; }
.box p:nth-child(3) { word-spacing: .12px; }
.box p:nth-child(4) { word-spacing: .3px; }
.box p:nth-child(6) { word-spacing: .11px; }
.box p:nth-child(10) { word-spacing: -.4px; }
.box p.blank { height: 14px; }
.h { position: absolute; width: 8px; height: 8px; background: rgba(40,40,255,.65); }
.h-tl { left: -4px; top: -4px; }
.h-tc { left: 359px; top: -4px; }
.h-tr { left: 721px; top: -4px; }
.h-ml { left: -4px; top: 243px; }
.h-mr { left: 721px; top: 243px; }
.h-bl { left: -4px; top: 489px; }
.h-bc { left: 359px; top: 489px; }
.h-br { left: 721px; top: 489px; }
.h-y { position: absolute; left: -3px; top: 13px; width: 6px; height: 6px; background: #e8e000; }
```
